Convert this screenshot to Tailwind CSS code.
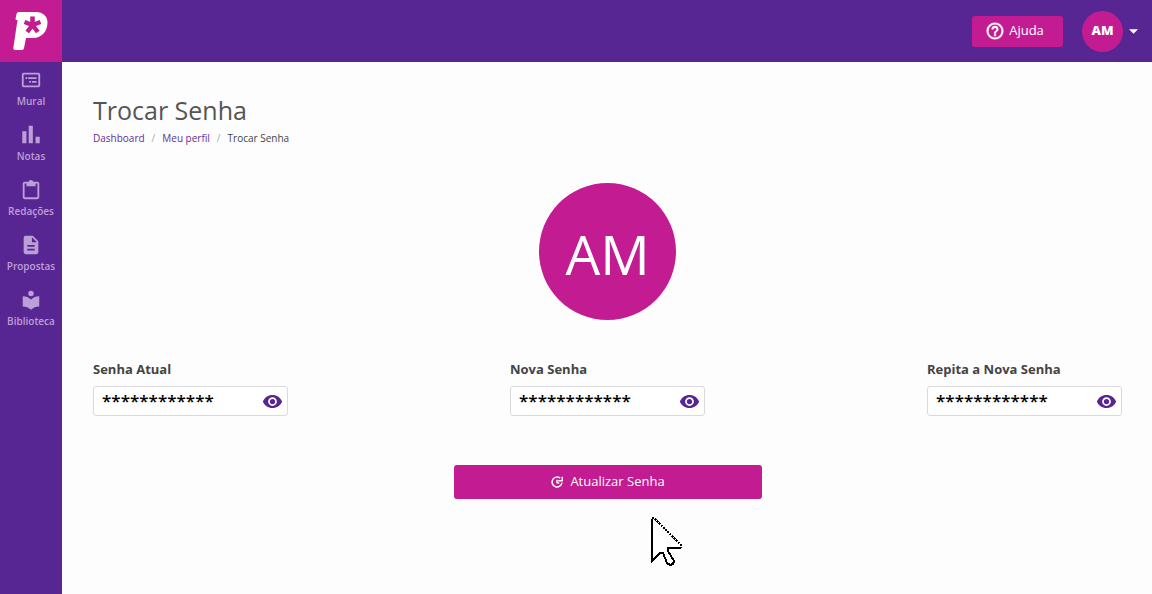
<!DOCTYPE html>
<html lang="pt-BR">
<head>
  <meta charset="UTF-8" />
  <meta name="viewport" content="width=device-width, initial-scale=1.0" />
  <title>Trocar Senha</title>
  <script src="https://cdn.jsdelivr.net/npm/@tailwindcss/browser@4"></script>
</head>
<body class="flex min-h-screen bg-[#fdfdfd] font-['Open_Sans',sans-serif] text-[#444]">

  <!-- Sidebar -->
  <aside class="flex w-[62px] shrink-0 flex-col bg-[#582693]">
    <a href="#" aria-label="Início" class="flex h-[62px] items-center justify-center bg-[#c31c93]">
      <svg class="size-[62px]" viewBox="0 0 62 62">
        <path fill="#fff" d="M19 12H36C43 12 47.500 16.500 47.500 22.500C47.500 31 42 38 33 38H26L24 48Q23.700 50 22 50H15Q13 50 13.300 48L17.500 20H16.500Q15.300 20 15.600 18.500L16.500 14Q17 12 19 12Z" />
        <path stroke="#c31c93" stroke-width="4.500" d="M32.500 25V16.500M32.500 25L40.500 22M32.500 25L37.800 32M32.500 25L27.200 32M32.500 25L24.500 22" />
      </svg>
    </a>
    <nav class="flex flex-col text-[10px] font-semibold text-[#bd9fd8]">
      <a href="#" class="flex h-[55px] flex-col items-center gap-1 pt-[7px]">
        <svg class="size-[22px]" viewBox="0 0 24 24" fill="currentColor"><path d="M20 4H4a2 2 0 0 0-2 2v12a2 2 0 0 0 2 2h16a2 2 0 0 0 2-2V6a2 2 0 0 0-2-2zm0 14H4V6h16v12zM6 9h2v2H6zm3 0h9v2H9zM10 13h2v2h-2zm3 0h5v2h-5z" /></svg>
        <span class="leading-3">Mural</span>
      </a>
      <a href="#" class="flex h-[55px] flex-col items-center gap-1 pt-[7px]">
        <svg class="size-[22px]" viewBox="0 0 24 24" fill="currentColor"><path d="M2.500 8H7v13H2.500zM9.500 2H14v19H9.500zM17 14h4.500v7H17z" /></svg>
        <span class="leading-3">Notas</span>
      </a>
      <a href="#" class="flex h-[55px] flex-col items-center gap-1 pt-[7px]">
        <svg class="size-[22px]" viewBox="0 0 24 24" fill="currentColor"><path d="M19 3h-4.200a3 3 0 0 0-5.600 0H5a2 2 0 0 0-2 2v15a2 2 0 0 0 2 2h14a2 2 0 0 0 2-2V5a2 2 0 0 0-2-2zm0 17H5V5h2v3h10V5h2v15z" /></svg>
        <span class="leading-3">Redações</span>
      </a>
      <a href="#" class="flex h-[55px] flex-col items-center gap-1 pt-[7px]">
        <svg class="size-[22px]" viewBox="0 0 24 24" fill="currentColor"><path d="M14 2H6a2 2 0 0 0-2 2v16a2 2 0 0 0 2 2h12a2 2 0 0 0 2-2V8l-6-6zm2 16H8v-2h8v2zm0-4H8v-2h8v2zm-3-5V3.500L18.500 9H13z" /></svg>
        <span class="leading-3">Propostas</span>
      </a>
      <a href="#" class="flex h-[55px] flex-col items-center gap-1 pt-[7px]">
        <svg class="size-[22px]" viewBox="0 0 24 24" fill="currentColor"><path d="M12 11.550C9.640 9.350 6.480 8 3 8v11c3.480 0 6.640 1.350 9 3.550 2.360-2.190 5.520-3.550 9-3.550V8c-3.480 0-6.640 1.350-9 3.550zM12 8a3 3 0 1 0 0-6 3 3 0 0 0 0 6z" /></svg>
        <span class="leading-3">Biblioteca</span>
      </a>
    </nav>
  </aside>

  <div class="flex min-w-0 grow flex-col">
    <!-- Top bar -->
    <header class="flex h-[62px] items-center justify-end bg-[#582693] pr-3.5 text-white">
      <button type="button" class="mr-[19px] flex h-[31px] w-[91px] items-center justify-center gap-1 rounded-[3px] bg-[#c31c93] pr-1.5 text-[13px]">
        <svg class="size-5" viewBox="0 0 24 24" fill="currentColor" stroke="currentColor" stroke-width=".5"><path d="M11 18h2v-2h-2v2zm1-16a10 10 0 1 0 0 20 10 10 0 0 0 0-20zm0 18a8 8 0 1 1 0-16 8 8 0 0 1 0 16zm0-14a4 4 0 0 0-4 4h2a2 2 0 1 1 4 0c0 2-3 1.750-3 5h2c0-2.250 3-2.500 3-5a4 4 0 0 0-4-4z" /></svg>
        Ajuda
      </button>
      <button type="button" class="flex items-center gap-1.5 text-[13px] font-extrabold">
        <span class="flex size-[41px] items-center justify-center rounded-full bg-[#c31c93]">AM</span>
        <svg class="h-[5px] w-[9px]" viewBox="0 0 10 5" fill="currentColor"><path d="M0 0h10L5 5z" /></svg>
      </button>
    </header>

    <!-- Content -->
    <main class="flex flex-col pt-[30px] pr-[30px] pl-[31px]">
      <h1 class="text-[25px] leading-9 text-[#555]">Trocar Senha</h1>
      <nav aria-label="Breadcrumb" class="mt-0.5 flex gap-[7px] text-[10px] leading-4">
        <a href="#" class="text-[#662d9b]">Dashboard</a>
        <span class="text-[#aaa]">/</span>
        <a href="#" class="text-[#662d9b]">Meu perfil</a>
        <span class="text-[#aaa]">/</span>
        <span>Trocar Senha</span>
      </nav>

      <div class="mt-[37px] flex size-[137px] items-center justify-center self-center rounded-full bg-[#c31c93] pt-1.5 text-[55px] text-white">AM</div>

      <form class="mt-10 flex flex-col">
        <div class="flex justify-between">
          <div class="flex w-[195px] flex-col gap-2">
            <label for="current" class="text-[13px] leading-[18px] font-bold">Senha Atual</label>
            <div class="flex h-[30px] items-center rounded-[3px] border border-[#d9d9df] bg-white pr-1 pl-2">
              <input id="current" type="text" value="************" class="w-full min-w-0 text-[17px] leading-6 font-semibold text-black outline-none" />
              <button type="button" aria-label="Mostrar senha" class="text-[#582693]"><svg class="size-[21px]" viewBox="0 0 24 24" fill="currentColor"><path d="M12 4.500C7 4.500 2.730 7.610 1 12c1.730 4.390 6 7.500 11 7.500s9.270-3.110 11-7.500c-1.730-4.390-6-7.500-11-7.500zM12 17a5 5 0 1 1 0-10 5 5 0 0 1 0 10zm0-8a3 3 0 1 0 0 6 3 3 0 0 0 0-6z" /></svg></button>
            </div>
          </div>
          <div class="flex w-[195px] flex-col gap-2">
            <label for="new" class="text-[13px] leading-[18px] font-bold">Nova Senha</label>
            <div class="flex h-[30px] items-center rounded-[3px] border border-[#d9d9df] bg-white pr-1 pl-2">
              <input id="new" type="text" value="************" class="w-full min-w-0 text-[17px] leading-6 font-semibold text-black outline-none" />
              <button type="button" aria-label="Mostrar senha" class="text-[#582693]"><svg class="size-[21px]" viewBox="0 0 24 24" fill="currentColor"><path d="M12 4.500C7 4.500 2.730 7.610 1 12c1.730 4.390 6 7.500 11 7.500s9.270-3.110 11-7.500c-1.730-4.390-6-7.500-11-7.500zM12 17a5 5 0 1 1 0-10 5 5 0 0 1 0 10zm0-8a3 3 0 1 0 0 6 3 3 0 0 0 0-6z" /></svg></button>
            </div>
          </div>
          <div class="flex w-[195px] flex-col gap-2">
            <label for="repeat" class="text-[13px] leading-[18px] font-bold">Repita a Nova Senha</label>
            <div class="flex h-[30px] items-center rounded-[3px] border border-[#d9d9df] bg-white pr-1 pl-2">
              <input id="repeat" type="text" value="************" class="w-full min-w-0 text-[17px] leading-6 font-semibold text-black outline-none" />
              <button type="button" aria-label="Mostrar senha" class="text-[#582693]"><svg class="size-[21px]" viewBox="0 0 24 24" fill="currentColor"><path d="M12 4.500C7 4.500 2.730 7.610 1 12c1.730 4.390 6 7.500 11 7.500s9.270-3.110 11-7.500c-1.730-4.390-6-7.500-11-7.500zM12 17a5 5 0 1 1 0-10 5 5 0 0 1 0 10zm0-8a3 3 0 1 0 0 6 3 3 0 0 0 0-6z" /></svg></button>
            </div>
          </div>
        </div>
        <button type="submit" class="mt-[49px] flex h-[34px] w-[308px] items-center justify-center gap-1.5 self-center rounded-[3px] bg-[#c31c93] text-[13px] text-white">
          <svg class="size-3.5" viewBox="0 0 24 24" fill="none" stroke="currentColor" stroke-width="2.500"><path d="M20.500 13A8.500 8.500 0 1 1 17.500 5.500M12 8v5l4 1M21 3v7h-7" /></svg>
          Atualizar Senha
        </button>
      </form>
    </main>
  </div>

  <!-- Mouse pointer -->
  <svg class="pointer-events-none absolute top-[516px] left-[649px] h-[51px] w-[34px]" viewBox="0 0 34 51" fill="none" stroke="#000" stroke-width="2" shape-rendering="crispEdges">
    <path fill="#fff" stroke="none" d="M3 2V45L11 37H14L18 47L21 49L24 48L25 44L20 34V32H32V29L5 2Z" />
    <path d="M32 32H19V35L25 45L24 48L21 49L18 47L14 37H11L3 45V3" />
    <path stroke-dasharray="2 1" d="M3 2H5L32 29V32" />
  </svg>
</body>
</html>
